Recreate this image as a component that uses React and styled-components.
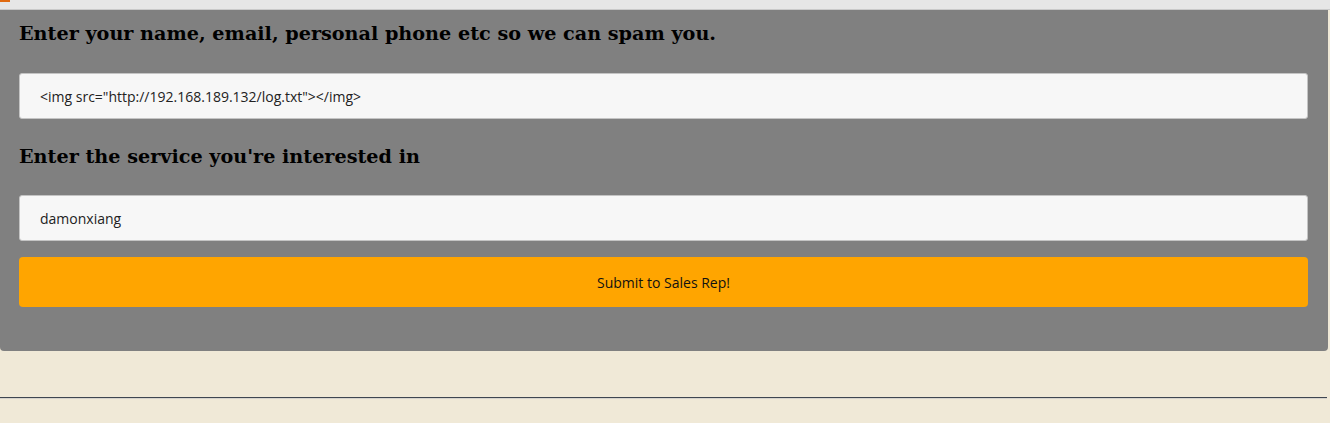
import React from 'react';
import styled, { createGlobalStyle } from 'styled-components';

const GlobalStyle = createGlobalStyle`
  html, body {
    margin: 0;
    padding: 0;
    background: #f0e9d7;
  }
`;

const TopStrip = styled.div`
  height: 9px;
  background: #e6e6e6;
  border-bottom: 1px solid #c9c9c9;
  display: flex;
  align-items: flex-start;
`;

const Mark = styled.span`
  display: block;
  width: 10px;
  height: 2px;
  background: #e06a10;
`;

const Panel = styled.div`
  background: #808080;
  width: 1328px;
  box-sizing: border-box;
  padding: 13px 20px 44px 19px;
  border-radius: 0 0 4px 4px;
`;

const Heading = styled.h3`
  margin: ${(p) => (p.$first ? '0 0 28px' : '27px 0 27px')};
  font-family: 'DejaVu Serif', serif;
  font-weight: bold;
  font-size: 19.2px;
  line-height: 22px;
  color: #000;
`;

const Field = styled.input`
  display: block;
  width: 100%;
  height: 46px;
  box-sizing: border-box;
  padding: 0 20px;
  background: #f7f7f7;
  border: 1px solid #c4c4c4;
  border-radius: 3px;
  font-family: 'Open Sans', 'Noto Sans', sans-serif;
  font-size: 14px;
  color: #222;
  outline: none;
`;

const SubmitButton = styled.button`
  display: block;
  width: 100%;
  height: 50px;
  margin-top: 16px;
  background: #ffa500;
  border: none;
  border-radius: 4px;
  font-family: 'Open Sans', 'Noto Sans', sans-serif;
  font-size: 14px;
  color: #111;
  cursor: pointer;
`;

const Rule = styled.hr`
  margin: 46px 3px 0 0;
  border: none;
  border-top: 1px solid #3f4650;
  border-bottom: 1px solid #d6d3cc;
`;

export default function App() {
  return (
    <>
      <GlobalStyle />
      <TopStrip>
        <Mark />
      </TopStrip>
      <Panel>
        <Heading $first>Enter your name, email, personal phone etc so we can spam you.</Heading>
        <Field type="text" defaultValue={'<img src="http://192.168.189.132/log.txt"></img>'} />
        <Heading>Enter the service you're interested in</Heading>
        <Field type="text" defaultValue="damonxiang" />
        <SubmitButton type="button">Submit to Sales Rep!</SubmitButton>
      </Panel>
      <Rule />
    </>
  );
}
